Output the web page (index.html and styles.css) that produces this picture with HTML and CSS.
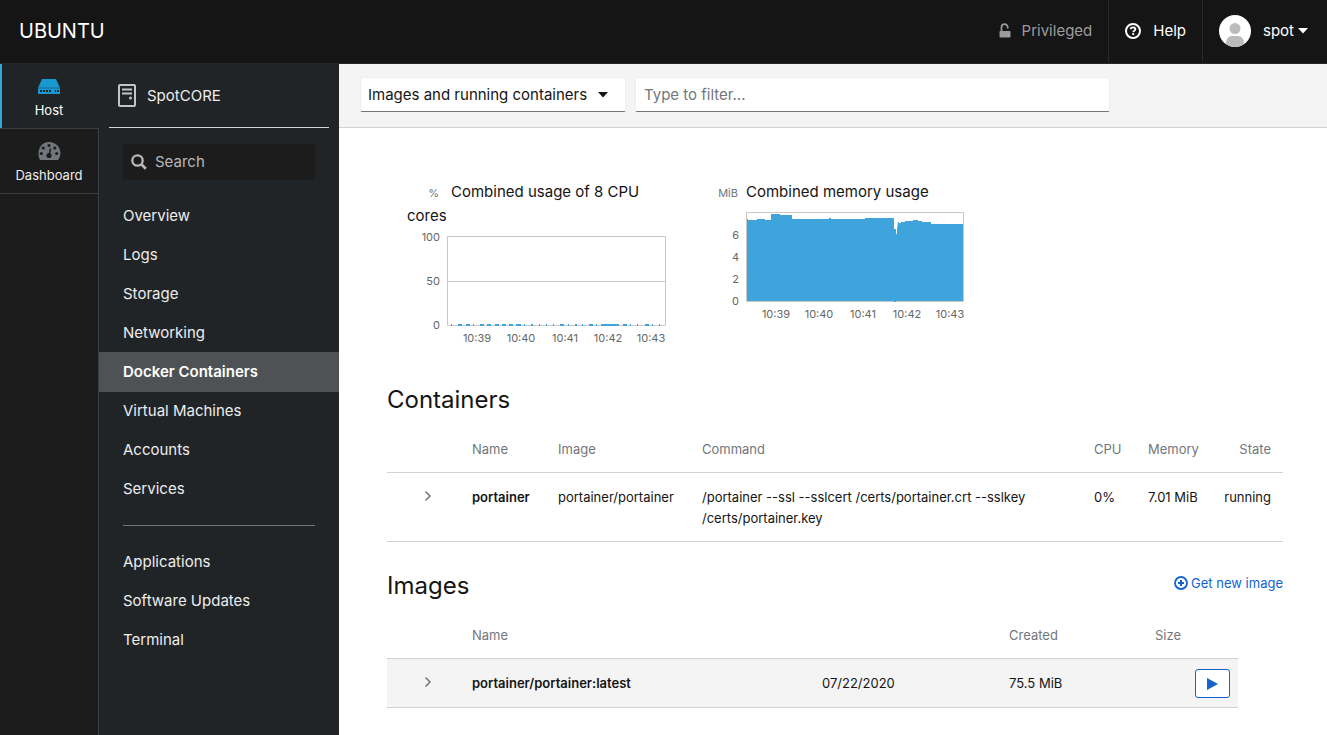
FILE: index.html
```html
<!DOCTYPE html>
<html lang="en">
<head>
<meta charset="utf-8">
<meta name="viewport" content="width=device-width, initial-scale=1">
<title>Docker Containers - SpotCORE</title>
<link rel="stylesheet" href="styles.css">
</head>
<body>
<div class="app">
  <header class="topbar">
    <span class="brand">UBUNTU</span>
    <div class="top-actions">
      <span class="top-item privileged">
        <svg width="12" height="16" viewBox="0 0 12 16" aria-hidden="true"><path d="M2.500 8V4.300a3.100 3.100 0 0 1 6.200 0V5.500" fill="none" stroke="currentColor" stroke-width="1.700"/><rect x="0.500" y="8" width="11" height="6.500" rx="1" fill="currentColor"/></svg>
        Privileged
      </span>
      <button type="button" class="top-item help">
        <svg width="16" height="16" viewBox="0 0 16 16" fill="none" stroke="currentColor" aria-hidden="true"><circle cx="8" cy="8" r="7" stroke-width="2"/><path d="M5.600 6.300C5.700 4.800 6.800 4.300 8 4.300c1.400 0 2.400.8 2.400 1.900C10.400 7.600 8.200 7.700 8.200 9.200" stroke-width="1.800"/><path d="M8.200 10.200V12" stroke-width="2"/></svg>
        Help
      </button>
      <button type="button" class="top-item user">
        <svg class="avatar" width="32" height="32" viewBox="0 0 32 32" aria-hidden="true"><circle cx="16" cy="16" r="16" fill="#fff"/><circle cx="16" cy="13.500" r="5.500" fill="#bbb"/><path d="M7 29c0-5 2.500-8 6-8h6c3.500 0 6 3 6 8-5 4-13 4-18 0z" fill="#bbb"/></svg>
        <span class="user-name">spot<svg width="10" height="6" viewBox="0 0 10 6" aria-hidden="true"><path d="M0 0h10L5 5.500z" fill="currentColor"/></svg></span>
      </button>
    </div>
  </header>
  <div class="body">
    <nav class="primary" aria-label="Primary">
      <a href="#host" class="primary-link active">
        <svg width="24" height="16" viewBox="0 0 24 16" aria-hidden="true"><path d="M5 0h14l4 9H1z" fill="#189ad1"/><path d="M1 9h22v6H1z" fill="#189ad1"/><path d="M1 8.500h22v1H1z" fill="#12698f"/><path d="M3 11h2v2H3zM6 11h2v2H6zM9 11h2v2H9zM12 11h2v2h-2zM18 11h1v2h-1zM20 11h2v2h-2z" fill="#212427"/></svg>
        Host
      </a>
      <a href="#dashboard" class="primary-link">
        <svg width="24" height="18" viewBox="0 0 24 18" aria-hidden="true"><path d="M3 18C-1 10 3 0 12 0s15 10 9 18z" fill="#72767b"/><g fill="#1c1c1c"><circle cx="4.300" cy="11.500" r="1.600"/><circle cx="6.200" cy="6" r="1.600"/><circle cx="12" cy="3.500" r="1.600"/><circle cx="17.800" cy="6" r="1.600"/><circle cx="19.700" cy="11.500" r="1.600"/><circle cx="12" cy="13.500" r="2.600"/></g><path d="M12 13.500l1.600-7" stroke="#1c1c1c" stroke-width="1.500"/></svg>
        Dashboard
      </a>
    </nav>
    <nav class="secondary" aria-label="System">
      <div class="host">
        <svg width="18" height="23" viewBox="0 0 18 23" fill="none" stroke="#c4c4c4" aria-hidden="true"><rect x="1" y="1" width="16" height="21" rx="1" stroke-width="2"/><path d="M4 5.500h10M4 9.500h10" stroke-width="2"/><circle cx="12.500" cy="14" r="1.500" fill="#c4c4c4" stroke="none"/></svg>
        SpotCORE
      </div>
      <label class="search">
        <svg width="16" height="16" viewBox="0 0 16 16" fill="none" stroke="#b8b8b8" aria-hidden="true"><circle cx="6.500" cy="6.500" r="5.200" stroke-width="2.300"/><path d="M10.300 10.300l4.500 4.500" stroke-width="2.700"/></svg>
        <input type="text" placeholder="Search" aria-label="Search">
      </label>
      <ul class="menu">
        <li><a href="#overview">Overview</a></li>
        <li><a href="#logs">Logs</a></li>
        <li><a href="#storage">Storage</a></li>
        <li><a href="#networking">Networking</a></li>
        <li><a href="#docker" class="current" aria-current="page">Docker Containers</a></li>
        <li><a href="#machines">Virtual Machines</a></li>
        <li><a href="#accounts">Accounts</a></li>
        <li><a href="#services">Services</a></li>
      </ul>
      <ul class="menu tools">
        <li><a href="#applications">Applications</a></li>
        <li><a href="#updates">Software Updates</a></li>
        <li><a href="#terminal">Terminal</a></li>
      </ul>
    </nav>
    <main class="main">
      <div class="toolbar">
        <div class="select-wrap">
          <select class="field" aria-label="Show">
            <option>Images and running containers</option>
            <option>Everything</option>
          </select>
          <svg class="caret" width="10" height="6" viewBox="0 0 10 6" aria-hidden="true"><path d="M0 0h10L5 5.500z" fill="#151515"/></svg>
        </div>
        <input class="field filter" type="text" placeholder="Type to filter..." aria-label="Filter">
      </div>
      <div class="content">
        <div class="charts">
          <section class="chart">
            <h3 class="chart-title"><span class="unit">%</span>Combined usage of 8 CPU cores</h3>
            <svg class="plot" width="278" height="113" viewBox="0 0 278 113" role="img" aria-label="CPU usage">
              <path d="M40.500 5.500h218v89h-218zM40.500 50.500h218" fill="none" stroke="#c8c8c8"/>
              <path d="M44 94h1M51 94h4M59 94h4M66 94h1M73 94h4M80 94h4M88 94h4M95 94h4M102 94h4M109 94h5M117 94h1M124 94h2M132 94h1M139 94h1M146 94h1M153 94h4M161 94h1M168 94h2M175 94h1M182 94h4M189 94h1M194 94h18M216 94h4M223 94h1M230 94h1M238 94h4M245 94h1M252 94h1" stroke="#3fa3dc" stroke-width="2"/>
              <g class="tick end"><text x="33" y="10">100</text><text x="33" y="54">50</text><text x="33" y="98">0</text></g>
              <g class="tick mid"><text x="70" y="111">10:39</text><text x="114" y="111">10:40</text><text x="158" y="111">10:41</text><text x="201" y="111">10:42</text><text x="244" y="111">10:43</text></g>
            </svg>
          </section>
          <section class="chart">
            <h3 class="chart-title"><span class="unit mib">MiB</span>Combined memory usage</h3>
            <svg class="plot" width="278" height="113" viewBox="0 0 278 113" role="img" aria-label="Memory usage">
              <path d="M41 94V12h1v1h9v-1h8v1h6V7h9v1h12v4h37v-1h2v1h34v-1h29v11h2v5h1v-5l1-7h1v1h2v-1h4v-1h8v-1h5v1h4v1h9v2h32v77z" fill="#3fa3dc"/>
              <path d="M40.500 5.500h217v89h-217z" fill="none" stroke="#c8c8c8"/>
              <path d="M188 94.500h2" stroke="#3fa3dc"/>
              <g class="tick end"><text x="33" y="32">6</text><text x="33" y="54">4</text><text x="33" y="76">2</text><text x="33" y="98">0</text></g>
              <g class="tick mid"><text x="70" y="111">10:39</text><text x="113" y="111">10:40</text><text x="157" y="111">10:41</text><text x="201" y="111">10:42</text><text x="244" y="111">10:43</text></g>
            </svg>
          </section>
        </div>
        <section class="listing">
          <div class="listing-head"><h2>Containers</h2></div>
          <table class="containers">
            <colgroup><col class="c-toggle"><col class="c-name"><col class="c-image"><col><col class="c-cpu"><col class="c-memory"><col class="c-state"></colgroup>
            <thead><tr><th></th><th>Name</th><th>Image</th><th>Command</th><th>CPU</th><th>Memory</th><th class="right">State</th></tr></thead>
            <tbody><tr>
              <td class="toggle"><button type="button" aria-label="Expand portainer"><svg width="8" height="12" viewBox="0 0 8 12" aria-hidden="true"><path d="M1.500 1.500L6 6l-4.500 4.500" fill="none" stroke="#72767b" stroke-width="1.500"/></svg></button></td>
              <td class="strong">portainer</td><td>portainer/portainer</td><td>/portainer --ssl --sslcert /certs/portainer.crt --sslkey /certs/portainer.key</td><td>0%</td><td>7.01 MiB</td><td class="right">running</td>
            </tr></tbody>
          </table>
        </section>
        <section class="listing">
          <div class="listing-head"><h2>Images</h2>
            <a href="#get" class="get"><svg width="14" height="14" viewBox="0 0 14 14" fill="none" stroke="currentColor" aria-hidden="true"><circle cx="7" cy="7" r="6" stroke-width="1.800"/><path d="M7 4v6M4 7h6" stroke-width="2"/></svg>Get new image</a></div>
          <table class="images">
            <colgroup><col class="c-toggle"><col class="c-tag"><col class="c-created"><col class="c-size"><col></colgroup>
            <thead><tr><th></th><th colspan="2">Name</th><th>Created</th><th>Size</th></tr></thead>
            <tbody><tr>
              <td class="toggle"><button type="button" aria-label="Expand portainer/portainer:latest"><svg width="8" height="12" viewBox="0 0 8 12" aria-hidden="true"><path d="M1.500 1.500L6 6l-4.500 4.500" fill="none" stroke="#72767b" stroke-width="1.500"/></svg></button></td>
              <td class="strong">portainer/portainer:latest</td><td>07/22/2020</td><td>75.5 MiB</td>
              <td class="action"><button type="button" class="run" aria-label="Run image"><svg width="11" height="12" viewBox="0 0 11 12" aria-hidden="true"><path d="M0 0l11 6-11 6z" fill="#1264cc"/></svg></button></td>
            </tr></tbody>
          </table>
        </section>
      </div>
    </main>
  </div>
</div>
</body>
</html>
```
FILE: styles.css
```css
* { box-sizing: border-box; }
body { margin: 0; background: #fff; color: #151515; font-family: Inter, "Open Sans", sans-serif; font-size: 15px; line-height: 24px; }
button { border: 0; padding: 0; background: none; color: inherit; font: inherit; cursor: pointer; }
input, select { font: inherit; }
a { text-decoration: none; }
h2, h3 { margin: 0; font-weight: 400; }
svg { flex: none; }

.app { display: flex; flex-direction: column; min-height: 100vh; }
.topbar { display: flex; justify-content: space-between; height: 64px; background: #151515; border-bottom: 1px solid #292929; color: #fff; }
.brand { padding: 19px; font-size: 20px; }
.top-actions { display: flex; height: 62px; }
.top-item { display: flex; align-items: center; gap: 12px; padding: 0 16px; border-left: 1px solid #292929; }
.top-item.privileged { border-left: 0; color: #9c9c9c; gap: 11px; }
.top-item.user { padding-right: 19px; }
.user-name { display: flex; align-items: center; gap: 4px; }

.body { display: flex; flex: 1; }
.primary { width: 99px; background: #1c1c1c; border-right: 1px solid #3c3f42; }
.primary-link { display: flex; flex-direction: column; align-items: center; justify-content: flex-end; gap: 3px; height: 65px; padding-bottom: 6px; border-bottom: 1px solid #3c3f42; color: #ededed; font-size: 13px; }
.primary-link.active { margin-right: -1px; padding-right: 1px; box-shadow: inset 2px 0 #39a5dc; background: #212427; color: #fff; }
.secondary { width: 240px; background: #212427; color: #ededed; }
.host { display: flex; align-items: center; gap: 11px; height: 64px; margin: 0 10px; padding-left: 9px; border-bottom: 1px solid #d2d2d2; }
.search { display: flex; align-items: center; gap: 8px; height: 36px; margin: 16px 24px; padding: 0 8px; border-radius: 2px; background: #1c1c1c; }
.search input { width: 100%; min-width: 0; border: 0; padding: 0; background: none; color: #fff; }
.search input::placeholder { color: #b8b8b8; opacity: 1; }
.menu { margin: 0; padding: 0; list-style: none; }
.menu a { display: block; padding: 8px 24px 7px; color: #ededed; }
.menu .current { background: #4f5255; box-shadow: 0 1px #4f5255; color: #fff; font-weight: 600; }
.tools::before { content: ""; display: block; margin: 17px 24px 16px; border-top: 1px solid #72767b; }

.main { flex: 1; min-width: 0; }
.toolbar { display: flex; align-items: flex-start; gap: 9px; height: 64px; padding: 13px 20px 0 21px; background: #f4f4f4; border-bottom: 1px solid #d2d2d2; }
.select-wrap { display: flex; align-items: center; flex: none; width: 266px; }
.field { width: 100%; height: 35px; padding: 0 8px; border: 1px solid #ededed; border-bottom-color: #72767b; border-radius: 2px; background: #fff; color: #151515; }
select.field { appearance: none; padding-left: 7px; padding-right: 36px; }
.caret { margin-left: -28px; margin-right: 18px; pointer-events: none; }
.filter { width: 475px; }
.filter::placeholder { color: #72767b; opacity: 1; }

.content { padding: 52px 44px 24px 48px; }
.charts { display: flex; gap: 21px; margin-bottom: 38px; }
.chart { width: 278px; padding-left: 20px; }
.chart-title { font-size: 15px; }
.unit { display: inline-block; width: 32px; margin-right: 12px; color: #72767b; font-size: 11px; line-height: 16px; text-align: right; }
.mib { margin-right: 8px; }
.plot { display: block; margin-top: 3px; overflow: visible; }
.tick { fill: #666; font-size: 11px; }
.end { text-anchor: end; }
.mid { text-anchor: middle; }

.listing { margin-bottom: 26px; }
.listing-head { display: flex; justify-content: space-between; align-items: center; height: 36px; }
.listing-head h2 { font-size: 24px; }
.get { display: flex; align-items: center; gap: 3px; padding-bottom: 6px; color: #1264cc; font-size: 13px; }
table { table-layout: fixed; width: 100%; margin-top: 7px; border-collapse: collapse; font-size: 13px; line-height: 21px; }
th, td { padding: 14px 10px 12px; text-align: left; vertical-align: top; border-bottom: 1px solid #d2d2d2; }
th { color: #72767b; font-weight: 400; }
.right { text-align: right; padding-right: 12px; }
.strong { font-weight: 600; }
.toggle { text-align: center; padding-right: 4px; }
.c-toggle { width: 75px; }
.c-name { width: 86px; }
.c-image { width: 144px; }
.c-cpu { width: 54px; }
.c-memory { width: 72px; }
.c-state { width: 73px; }
.images { width: 95%; }
.images tbody { background: #f4f4f4; }
.c-tag { width: 350px; }
.c-created { width: 187px; }
.c-size { width: 146px; }
.images .action { padding: 10px 8px 9px; text-align: right; }
.run { display: inline-flex; align-items: center; justify-content: center; width: 35px; height: 29px; border: 1px solid #1264cc; border-radius: 3px; background: #fff; vertical-align: top; }
```
